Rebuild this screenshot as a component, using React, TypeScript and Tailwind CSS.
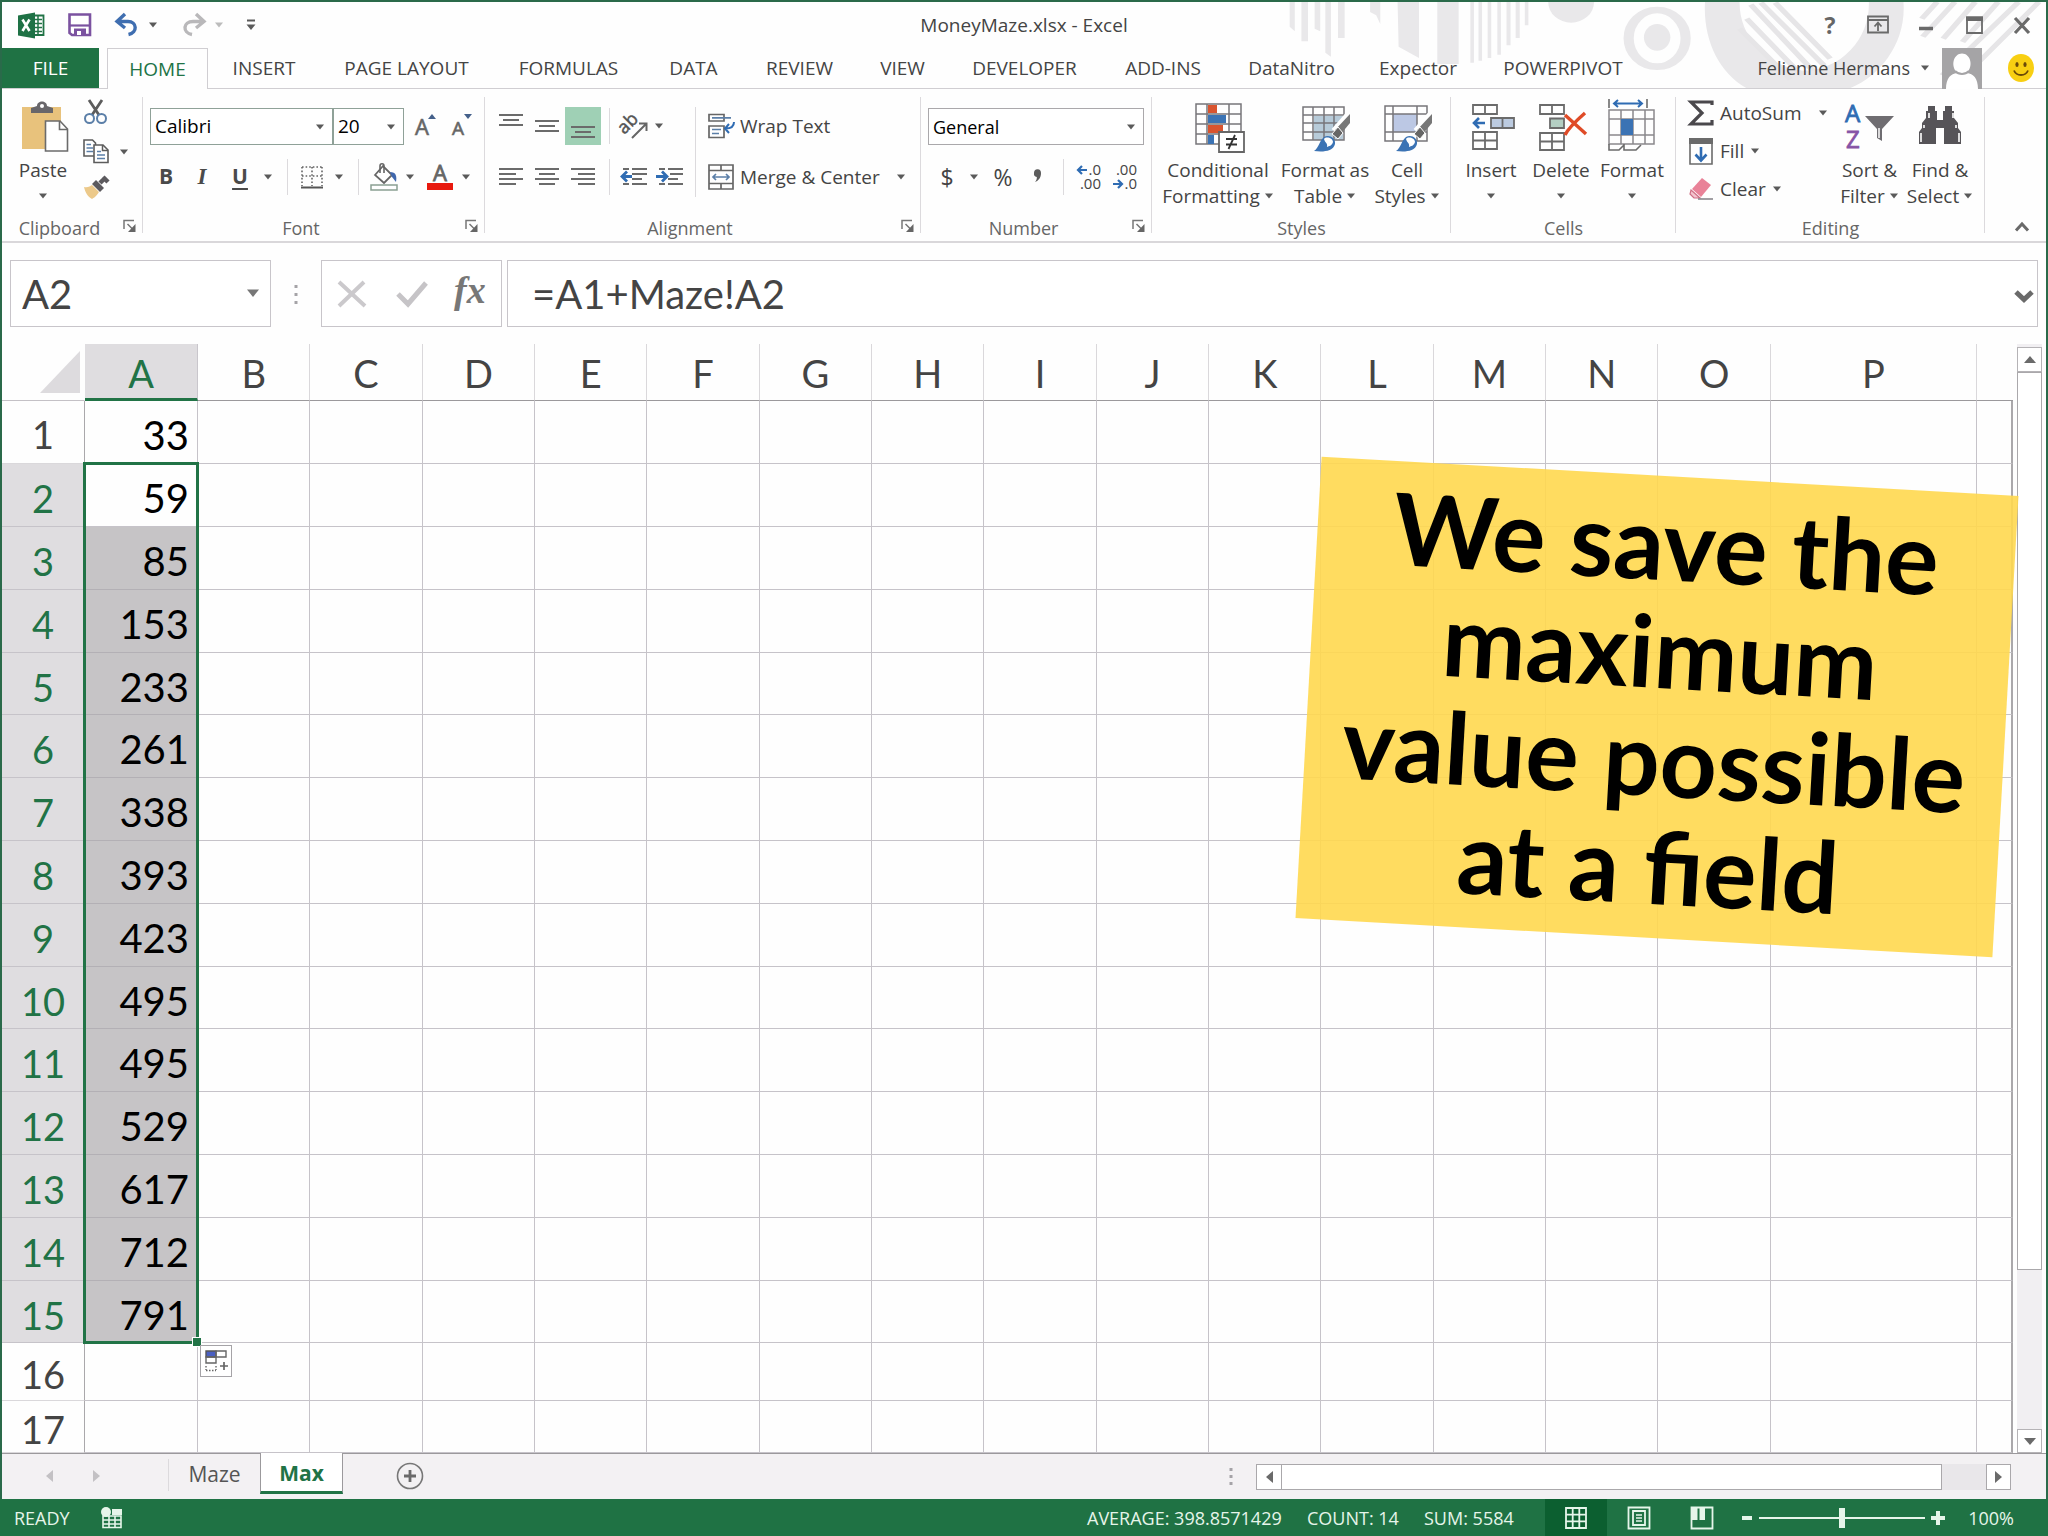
import type { ReactNode } from "react";

const UI = "font-['Open_Sans','Noto_Sans',sans-serif]";
const BODY = "font-['Lato',sans-serif]";

type IconProps = { w: number; h: number; className?: string; children: ReactNode };

function Icon({ w, h, className = "", children }: IconProps) {
  return (
    <svg width={w} height={h} viewBox={`0 0 ${w} ${h}`} fill="none" aria-hidden="true" className={`shrink-0 overflow-visible ${className}`}>
      {children}
    </svg>
  );
}

function Tri({ className = "" }: { className?: string }) {
  return (
    <Icon w={10} h={6} className={className}>
      <path d="M1 0.5H9L5 5.5Z" fill="#5a5a5a" />
    </Icon>
  );
}

function DropButton({ label, className = "" }: { label: string; className?: string }) {
  return (
    <button aria-label={label} className={`flex h-9 items-center ${className}`}>
      <Tri />
    </button>
  );
}

function IconButton({ label, className = "", children }: { label: string; className?: string; children: ReactNode }) {
  return (
    <button aria-label={label} className={`flex h-9 shrink-0 items-center justify-center ${className}`}>
      {children}
    </button>
  );
}

function Sep({ className = "" }: { className?: string }) {
  return <span className={`w-px shrink-0 bg-[#dcdadd] ${className}`} />;
}

function Launcher({ label }: { label: string }) {
  return (
    <button aria-label={label} className="absolute right-1.5 bottom-2">
      <Icon w={14} h={14}>
        <path d="M1 10V1.5H11M4.5 5L10 10.5" stroke="#777" strokeWidth="1.5" />
        <path d="M12.5 5V13H5Z" fill="#666" />
      </Icon>
    </button>
  );
}

function Group({ title, width, launcher = false, children }: { title: string; width: string; launcher?: boolean; children: ReactNode }) {
  return (
    <section aria-label={title} className={`relative flex shrink-0 flex-col ${width}`}>
      <div className="flex flex-1">{children}</div>
      <div className={`flex h-[26px] items-center justify-center text-lg text-[#666] ${launcher ? "pr-[26px]" : ""}`}>{title}</div>
      {launcher && <Launcher label={`${title} settings`} />}
      <span className="absolute top-2 right-0 bottom-2 w-px bg-[#dcdadd]" />
    </section>
  );
}

function BigButton({ lines, arrow, width, children }: { lines: string[]; arrow: "inline" | "below"; width: string; children: ReactNode }) {
  return (
    <button className={`flex shrink-0 flex-col items-center ${width}`}>
      <span className="flex h-16 items-end pb-1">{children}</span>
      {lines.map((line, i) => (
        <span key={line} className="flex h-[26px] items-center gap-1 text-[19px] leading-[26px] whitespace-nowrap">
          {line}
          {arrow === "inline" && i === lines.length - 1 && <Tri />}
        </span>
      ))}
      {arrow === "below" && (
        <span className="flex h-[26px] items-center">
          <Tri />
        </span>
      )}
    </button>
  );
}

function Lines({ h, rows }: { h: number; rows: [number, number, number][] }) {
  return (
    <Icon w={24} h={h}>
      {rows.map(([x1, x2, y]) => (
        <path key={y} d={`M${x1} ${y}H${x2}`} stroke="#6b6b6b" strokeWidth="2" />
      ))}
    </Icon>
  );
}

/* ---------- title bar and tabs ---------- */

function HeaderPattern() {
  return (
    <svg aria-hidden="true" viewBox="0 0 1568 258" preserveAspectRatio="none" className="pointer-events-none absolute top-0 -right-0.5 h-[86px] w-[798px]">
      <g fill="#e9e8ea">
        <path d="M78 0h10v88l-10-14zM101 0h13v118h-13zM127 0h11v88l-11-8zM148 0h11v164l-11-12zM173 0h13v108h-13zM236 0h20v66l-8-26-12-10z" />
        <path d="M290 0h42v168l-40-34zM368 0h42v186h-42z" />
        <path d="M433 0h7v182h-7zM449 0h7v176h-7zM467 0h7v168h-7zM486 0h7v158h-7zM504 0h8v130h-8zM522 0h8v108h-8zM540 0h7v70h-7z" />
        <path d="M586 0a45 62 0 0 0 90 0z" />
        <ellipse cx="800" cy="106" rx="26" ry="40" />
        <path d="M894 0H962A140 205 0 0 0 1088 206A130 200 0 0 0 1216 0H1284C1290 120 1240 220 1180 258H975C920 210 890 110 894 0Z" />
      </g>
      <ellipse cx="800" cy="109" rx="56" ry="85" fill="none" stroke="#e9e8ea" strokeWidth="20" />
      <g stroke="#e6e5e7" strokeWidth="12">
        <path d="M962 80L1062 232M976 50L1084 220M984 8L1106 206M1004 2L1128 190M1032 2L1140 170" />
        <path d="M1320 50L1350 0M1322 104L1385 0M1362 110L1425 0M1400 120L1470 0M1360 220L1510 0M1432 180L1550 0" />
      </g>
    </svg>
  );
}

function TitleBar() {
  return (
    <div className="relative flex h-[46px] items-center justify-between">
      <div className="flex items-center pl-4">
        <Icon w={28} h={27}>
          <path d="M14 3.500H25.500V23H14" stroke="#217346" strokeWidth="1.800" fill="#fff" />
          <path d="M16 7.500H24M16 11.500H24M16 15.500H24M16 19.500H24M20 4V23" stroke="#217346" strokeWidth="1.500" />
          <path d="M0 3.500L17 0.500V26.500L0 23.500Z" fill="#1e7145" />
          <path d="M4.500 7.500L11.500 19M11.500 7.500L4.500 19" stroke="#fff" strokeWidth="2.600" />
        </Icon>
        <button aria-label="Save" className="ml-[22px]">
          <Icon w={24} h={24}>
            <path d="M1.500 1.500H22V22H4L1.500 20Z" fill="#fff" stroke="#7b52a0" strokeWidth="2.600" />
            <path d="M2 12.500H22" stroke="#7b52a0" strokeWidth="2.200" />
            <path d="M6 15.500H18V23H6Z" fill="#7b52a0" />
            <path d="M9 18H13V22H9Z" fill="#fff" />
          </Icon>
        </button>
        <button aria-label="Undo" className="ml-[22px]">
          <Icon w={24} h={24}>
            <path d="M11 1L3 8.500L11 15M3.500 8.500H14C23 8.500 24 19.500 14.500 21.500" stroke="#3f6eb0" strokeWidth="3.400" />
          </Icon>
        </button>
        <Tri className="ml-2.5" />
        <button aria-label="Redo" className="ml-6">
          <Icon w={24} h={24}>
            <path d="M14 1L22 8.500L14 15M21.500 8.500H11C1 8.500 0 19.500 10 21.500" stroke="#b9b8ba" strokeWidth="3.400" />
          </Icon>
        </button>
        <Tri className="ml-2 opacity-40" />
        <button aria-label="Customize quick access toolbar" className="ml-[22px]">
          <Icon w={10} h={12}>
            <path d="M1 1.500H9" stroke="#5a5a5a" strokeWidth="2" />
            <path d="M0.500 5.500H9.500L5 11Z" fill="#5a5a5a" />
          </Icon>
        </button>
      </div>
      <h1 className="absolute inset-x-0 text-center text-[19px] text-[#444]">MoneyMaze.xlsx - Excel</h1>
      <div className="relative flex items-center gap-6 pr-3 text-[#666]">
        <button aria-label="Help" className="w-6 text-[23px] leading-6 font-bold">?</button>
        <button aria-label="Ribbon display options">
          <Icon w={24} h={20}>
            <path d="M2 1.500H22V17.500H2ZM2 5H22M12 16V8M8.500 11.500L12 7.500L15.500 11.500" stroke="#6a6a6a" strokeWidth="1.800" />
          </Icon>
        </button>
        <button aria-label="Minimize">
          <Icon w={24} h={20}>
            <path d="M5 13.500H19" stroke="#6a6a6a" strokeWidth="3.500" />
          </Icon>
        </button>
        <button aria-label="Maximize">
          <Icon w={24} h={20}>
            <path d="M5 2.500H20V18H5Z" stroke="#6a6a6a" strokeWidth="1.800" />
            <path d="M4 1.500H21V6H4Z" fill="#6a6a6a" />
          </Icon>
        </button>
        <button aria-label="Close">
          <Icon w={24} h={20}>
            <path d="M5 3L19 18M19 3L5 18" stroke="#6a6a6a" strokeWidth="3.200" />
          </Icon>
        </button>
      </div>
    </div>
  );
}

const TABS = [
  { name: "INSERT", width: "w-28" },
  { name: "PAGE LAYOUT", width: "w-[173px]" },
  { name: "FORMULAS", width: "w-[151px]" },
  { name: "DATA", width: "w-[99px]" },
  { name: "REVIEW", width: "w-[113px]" },
  { name: "VIEW", width: "w-[93px]" },
  { name: "DEVELOPER", width: "w-[151px]" },
  { name: "ADD-INS", width: "w-[126px]" },
  { name: "DataNitro", width: "w-[131px]" },
  { name: "Expector", width: "w-[122px]" },
  { name: "POWERPIVOT", width: "w-[168px]" },
];

function TabRow() {
  return (
    <nav className="relative flex h-[41px] items-stretch border-b border-[#d0ced2] text-[19px] text-[#444]">
      <button className="w-[97px] bg-[#1f7244] text-white">FILE</button>
      <button className="-mb-px ml-2 w-[101px] border border-b-0 border-[#d0ced2] bg-[#fefefe] text-[#217346]">HOME</button>
      {TABS.map((t) => (
        <button key={t.name} className={`shrink-0 whitespace-nowrap ${t.width}`}>
          {t.name}
        </button>
      ))}
      <div className="ml-auto flex items-center pr-3">
        <button className="flex items-center gap-2.5 text-lg whitespace-nowrap">
          Felienne Hermans <Tri />
        </button>
        <Icon w={40} h={41} className="ml-3">
          <path d="M0 0H40V41H0Z" fill="#a5a4a6" />
          <path d="M4 41C4 30 9 25.500 15 25C8 17 12 5.500 20 5.500S32 17 25 25C31 25.500 36 30 36 41Z" fill="#fff" />
          <path d="M13 23C17 27 23 27 27 23" stroke="#a5a4a6" strokeWidth="2" />
        </Icon>
        <button aria-label="Send a smile" className="ml-[26px]">
          <Icon w={26} h={28}>
            <ellipse cx="13" cy="14" rx="13" ry="14" fill="#f8cf12" />
            <ellipse cx="9" cy="10.500" rx="1.600" ry="2.500" fill="#6b4a08" />
            <ellipse cx="17" cy="10.500" rx="1.600" ry="2.500" fill="#6b4a08" />
            <path d="M6 16.500C8.500 22.500 17.500 22.500 20 16.500" stroke="#6b4a08" strokeWidth="1.800" />
          </Icon>
        </button>
      </div>
    </nav>
  );
}

/* ---------- ribbon ---------- */

function ClipboardGroup() {
  return (
    <Group title="Clipboard" width="w-[141px]" launcher>
      <div className="pt-1 pl-2">
        <BigButton lines={["Paste"]} arrow="below" width="w-[66px]">
          <Icon w={48} h={52} className="ml-1">
            <path d="M1 6H40V48H1Z" fill="#e8c27c" />
            <path d="M10 12V7L16 5C16 -1 26 -1 26 5L32 7V12Z" fill="#68666a" />
            <circle cx="21" cy="5" r="2" fill="#fff" />
            <path d="M24.500 20H39L46.500 28V50H24.500Z" fill="#fff" stroke="#6b6b6b" strokeWidth="1.600" />
            <path d="M38.500 20V28.500H46.500" stroke="#6b6b6b" strokeWidth="1.600" />
          </Icon>
        </BigButton>
      </div>
      <div className="flex flex-col pt-[11px] pl-[7px]">
        <button aria-label="Cut">
          <Icon w={26} h={25}>
            <path d="M6 0L16 15M19 0L9 15" stroke="#5c5c5c" strokeWidth="2.800" />
            <circle cx="6.500" cy="18.500" r="4.500" stroke="#5b7fa8" strokeWidth="2" />
            <circle cx="18.500" cy="18.500" r="4.500" stroke="#5b7fa8" strokeWidth="2" />
          </Icon>
        </button>
        <div className="mt-3.5 flex items-center">
          <button aria-label="Copy">
            <Icon w={26} h={25}>
              <path d="M1 1H9.500L12.500 4V17H1Z" fill="#fff" stroke="#5c5c5c" strokeWidth="1.600" />
              <path d="M3.500 5.500H8M3.500 9H10M3.500 12.500H10" stroke="#5b7fa8" strokeWidth="1.500" />
              <path d="M11 6H20L25 11V23.500H11Z" fill="#fff" stroke="#5c5c5c" strokeWidth="1.600" />
              <path d="M19.500 6V11.500H25" stroke="#5c5c5c" strokeWidth="1.500" />
              <path d="M14 12.500H18M14 16H22M14 19.500H22" stroke="#5b7fa8" strokeWidth="1.500" />
            </Icon>
          </button>
          <Tri className="ml-2.5" />
        </div>
        <button aria-label="Format painter" className="mt-3">
          <Icon w={27} h={24}>
            <path d="M1 11C5 12 7 10 9 9L16 16C13 21 9 23 9 23C5 21 2 16 1 11Z" fill="#ecc98a" />
            <path d="M9 8L13 4L21 12L17 16Z" fill="#5c5a5e" />
            <path d="M17 7L22 2M20 1L25 6" stroke="#5c5a5e" strokeWidth="4.500" />
          </Icon>
        </button>
      </div>
    </Group>
  );
}

function FontGroup() {
  return (
    <Group title="Font" width="w-[342px]" launcher>
      <div className="flex flex-col gap-[15px] pt-[19px] pl-[7px]">
        <div className="flex h-9 items-center">
          <label className="relative flex">
            <select aria-label="Font name" className="h-[37px] w-[183px] appearance-none border border-[#8fa198] bg-white pl-1 text-[19px] text-black">
              <option>Calibri</option>
            </select>
            <Tri className="absolute top-4 right-2" />
          </label>
          <label className="relative flex">
            <select aria-label="Font size" className="h-[37px] w-[71px] appearance-none border border-l border-[#8fa198] bg-white pl-1 text-[19px] text-black">
              <option>20</option>
            </select>
            <Tri className="absolute top-4 right-2" />
          </label>
          <IconButton label="Increase font size" className="ml-2.5">
            <Icon w={24} h={26}>
              <text x="1" y="22" fontSize="22" fill="#666" stroke="#666" strokeWidth="0.600" fontFamily="Open Sans">A</text>
              <path d="M14 6L18 1L22 6Z" fill="#44608a" />
            </Icon>
          </IconButton>
          <IconButton label="Decrease font size" className="ml-3">
            <Icon w={24} h={26}>
              <text x="2" y="22" fontSize="19" fill="#666" stroke="#666" strokeWidth="0.600" fontFamily="Open Sans">A</text>
              <path d="M14 1L18 6L22 1Z" fill="#44608a" />
            </Icon>
          </IconButton>
        </div>
        <div className="flex h-9 items-center text-[21px] text-[#4a4a4a]">
          <IconButton label="Bold" className="w-8 font-bold"><span>B</span></IconButton>
          <IconButton label="Italic" className="ml-1 w-8 font-['Liberation_Serif',serif] text-[23px] font-bold italic"><span>I</span></IconButton>
          <IconButton label="Underline" className="ml-1 w-9 font-bold underline decoration-2 underline-offset-4"><span>U</span></IconButton>
          <DropButton label="Underline styles" className="ml-[5px]" />
          <Sep className="ml-3.5 h-9" />
          <IconButton label="Borders" className="ml-3">
            <Icon w={24} h={24}>
              <path d="M2 2H22M2 11H22M2 2V21M12 2V21M22 2V21" stroke="#666" strokeWidth="1.600" strokeDasharray="1.600 2" />
              <path d="M1 22.500H23" stroke="#555" strokeWidth="2" />
            </Icon>
          </IconButton>
          <DropButton label="Border styles" className="ml-2.5" />
          <Sep className="ml-3.5 h-9" />
          <IconButton label="Fill color" className="ml-[11px]">
            <Icon w={28} h={28}>
              <path d="M5 12L13 3L22 12L14 20Z" fill="#fff" stroke="#666" strokeWidth="1.800" />
              <path d="M10 10V3C10 0 14 0 14 3V10" stroke="#666" strokeWidth="1.600" />
              <path d="M20 9C26 9 27 13 26 19L22 14Z" fill="#3f67ad" />
              <path d="M1 22H27V27H1Z" fill="#fff" stroke="#8aa092" strokeWidth="1.500" />
            </Icon>
          </IconButton>
          <DropButton label="Fill colors" className="ml-[7px]" />
          <IconButton label="Font color" className="ml-[11px]">
            <Icon w={28} h={28}>
              <text x="14" y="18" textAnchor="middle" fontSize="22" fill="#666" stroke="#666" strokeWidth="0.800" fontFamily="Open Sans">A</text>
              <path d="M1 20H27V27H1Z" fill="#e8190e" />
            </Icon>
          </IconButton>
          <DropButton label="Font colors" className="ml-[7px]" />
        </div>
      </div>
    </Group>
  );
}

function AlignmentGroup() {
  return (
    <Group title="Alignment" width="w-[436px]" launcher>
      <div className="flex flex-col gap-[15px] pt-[18px] pl-2">
        <div className="flex h-[37px] items-center">
          <IconButton label="Top align" className="w-9"><Lines h={32} rows={[[0, 24, 5], [4, 20, 10], [0, 24, 15]]} /></IconButton>
          <IconButton label="Middle align" className="w-9"><Lines h={32} rows={[[0, 24, 11], [4, 20, 16], [0, 24, 21]]} /></IconButton>
          <button aria-label="Bottom align" className="flex h-[38px] w-9 items-center justify-center bg-[#9fd0b5]">
            <Lines h={32} rows={[[0, 24, 17], [4, 20, 22], [0, 24, 27]]} />
          </button>
          <Sep className="ml-2 h-9" />
          <IconButton label="Orientation" className="ml-2.5">
            <Icon w={30} h={28}>
              <g transform="rotate(-45 10 13)">
                <text x="-1" y="16" fontSize="18" fill="#555" stroke="#555" strokeWidth="0.500" fontFamily="Open Sans">ab</text>
              </g>
              <path d="M12 26L26 12M19 11.500H26.500V19" stroke="#666" strokeWidth="2" />
            </Icon>
          </IconButton>
          <DropButton label="Orientation options" className="ml-1" />
        </div>
        <div className="flex h-9 items-center">
          <IconButton label="Align left" className="w-9"><Lines h={22} rows={[[0, 24, 3], [0, 17, 8], [0, 24, 13], [0, 17, 18]]} /></IconButton>
          <IconButton label="Center" className="w-9"><Lines h={22} rows={[[0, 24, 3], [4, 20, 8], [0, 24, 13], [4, 20, 18]]} /></IconButton>
          <IconButton label="Align right" className="w-9"><Lines h={22} rows={[[0, 24, 3], [7, 24, 8], [0, 24, 13], [7, 24, 18]]} /></IconButton>
          <Sep className="ml-2 h-9" />
          <IconButton label="Decrease indent" className="ml-2.5">
            <Icon w={27} h={22}>
              <path d="M3 3H9M3 18H9M12 3H27M12 8H27M12 13H22M12 18H27" stroke="#6b6b6b" strokeWidth="2" />
              <path d="M12 10.500H2M7 5.500L2 10.500L7 15.500" stroke="#2f6cb3" strokeWidth="2.800" />
            </Icon>
          </IconButton>
          <IconButton label="Increase indent" className="ml-[9px]">
            <Icon w={27} h={22}>
              <path d="M3 3H9M3 18H9M12 3H27M14 8H27M12 13H22M12 18H27" stroke="#6b6b6b" strokeWidth="2" />
              <path d="M0 10.500H10M6 5.500L11 10.500L6 15.500" stroke="#2f6cb3" strokeWidth="2.800" />
            </Icon>
          </IconButton>
        </div>
      </div>
      <Sep className="mt-[18px] ml-3 h-[90px]" />
      <div className="flex flex-col gap-[15px] pt-[19px] pl-3 text-[19px]">
        <button className="flex h-9 items-center gap-1">
          <Icon w={28} h={26}>
            <path d="M1 1.500H16V8H1ZM1 13H16V24.500H1Z" stroke="#666" strokeWidth="1.700" />
            <path d="M4 4.800H23M4 16.500H13M4 20.500H11" stroke="#5b7fa8" strokeWidth="1.700" />
            <path d="M26 9C26 14 23 15.500 17.500 15.500M21 11L17 15.500L21 20" stroke="#2f6cb3" strokeWidth="2" />
          </Icon>
          Wrap Text
        </button>
        <div className="flex h-9 items-center">
          <button className="flex items-center gap-1 whitespace-nowrap">
            <Icon w={28} h={26}>
              <path d="M1 1H25V25H1ZM1 6.500H25M1 19.500H25M13 1V6.500M13 19.500V25" stroke="#666" strokeWidth="1.700" />
              <path d="M5 13H21M8 10L5 13L8 16M18 10L21 13L18 16" stroke="#5b7fa8" strokeWidth="1.700" />
            </Icon>
            Merge &amp; Center
          </button>
          <DropButton label="Merge options" className="ml-4" />
        </div>
      </div>
    </Group>
  );
}

function NumberGroup() {
  return (
    <Group title="Number" width="w-[231px]" launcher>
      <div className="flex flex-col gap-[15px] pt-[19px] pl-[7px]">
        <label className="relative flex h-9">
          <select aria-label="Number format" className="h-[37px] w-[216px] appearance-none border border-[#aaa8ab] bg-white pl-1 text-lg text-black">
            <option>General</option>
          </select>
          <Tri className="absolute top-4 right-2" />
        </label>
        <div className="flex h-9 items-center text-[23px]">
          <IconButton label="Accounting format" className="ml-[5px] w-7"><span>$</span></IconButton>
          <DropButton label="Accounting formats" className="ml-2" />
          <IconButton label="Percent style" className="ml-2 w-8"><span>%</span></IconButton>
          <IconButton label="Comma style" className="ml-2 w-5">
            <Icon w={10} h={16}>
              <path d="M2 4A3.500 4 0 1 1 9 4.500C9 9 6 12 3 13C4.500 11 5 10 4.800 8A3.500 3.500 0 0 1 2 4Z" fill="#5c5c5c" />
            </Icon>
          </IconButton>
          <Sep className="ml-4 h-9" />
          <IconButton label="Increase decimal" className="ml-3">
            <Icon w={26} h={28}>
              <text x="25" y="12" textAnchor="end" fontSize="15" fill="#444" fontFamily="Open Sans">.0</text>
              <text x="25" y="26" textAnchor="end" fontSize="15" fill="#444" fontFamily="Open Sans">.00</text>
              <path d="M11 7H1.500M6 3L2 7L6 11" stroke="#2f6cb3" strokeWidth="2.200" />
            </Icon>
          </IconButton>
          <IconButton label="Decrease decimal" className="ml-2.5">
            <Icon w={26} h={28}>
              <text x="25" y="12" textAnchor="end" fontSize="15" fill="#444" fontFamily="Open Sans">.00</text>
              <text x="25" y="26" textAnchor="end" fontSize="15" fill="#444" fontFamily="Open Sans">.0</text>
              <path d="M1 21H10.500M6 17L10 21L6 25" stroke="#2f6cb3" strokeWidth="2.200" />
            </Icon>
          </IconButton>
        </div>
      </div>
    </Group>
  );
}

function Brush() {
  return (
    <g>
      <path d="M47 11L33 27" stroke="#fff" strokeWidth="9" />
      <path d="M48 9V18L38 30L33 25Z" fill="#777" />
      <path d="M36 22L41 28L36 34L30 29Z" fill="#666" stroke="#fff" strokeWidth="1" />
      <path d="M12 46C17 43 17 36 22 32C27 29 34 33 33 39C31 47 20 47 12 46Z" fill="#3b73b4" />
      <path d="M22 34C24 31 31 33 31 37C30 41 27 41 25 42C26 38 23 38 22 34Z" fill="#fff" />
    </g>
  );
}

function StylesGroup() {
  return (
    <Group title="Styles" width="w-[299px]">
      <div className="flex pt-1 pl-2">
        <BigButton lines={["Conditional", "Formatting"]} arrow="inline" width="w-[116px]">
          <Icon w={50} h={50} className="ml-1">
            <path d="M1 1H46V41H1ZM12 1V41M34 1V41M1 11H46M1 21H46M1 31H46" stroke="#77757a" strokeWidth="1.500" />
            <path d="M13 2H22V10H13ZM13 22H28V30H13Z" fill="#d9542f" />
            <path d="M13 12H31V20H13ZM13 32H19V41H13Z" fill="#3b73b4" />
            <path d="M24 29H49V49H24Z" fill="#fff" stroke="#666" strokeWidth="1.800" />
            <path d="M31 36H42M31 41.500H42M40 32L33.500 46" stroke="#333" strokeWidth="1.800" />
          </Icon>
        </BigButton>
        <BigButton lines={["Format as", "Table"]} arrow="inline" width="w-[98px]">
          <Icon w={50} h={48} className="ml-1">
            <path d="M12 11H41V35H12Z" fill="#b7cbd9" />
            <path d="M1 2H42V35H1ZM11 2V35M22 2V35M32 2V35M1 10H42M1 18H42M1 27H42" stroke="#77757a" strokeWidth="1.500" />
            <Brush />
          </Icon>
        </BigButton>
        <BigButton lines={["Cell", "Styles"]} arrow="inline" width="w-[66px]">
          <Icon w={50} h={48} className="ml-1">
            <path d="M9 9H33V27H9Z" fill="#bcc8e4" />
            <path d="M1 1H43V36H1ZM9 1V36M33 1V36M1 9H43M1 27H43" stroke="#77757a" strokeWidth="1.500" />
            <Brush />
          </Icon>
        </BigButton>
      </div>
    </Group>
  );
}

function CellsGroup() {
  return (
    <Group title="Cells" width="w-[225px]">
      <div className="flex pt-1 pl-1.5">
        <BigButton lines={["Insert"]} arrow="below" width="w-[68px]">
          <Icon w={44} h={50} className="ml-1">
            <path d="M2 2H26V11H2ZM14 2V11M2 29H26V46H2ZM14 29V46M2 37.500H26" stroke="#6b6b6b" strokeWidth="1.800" />
            <path d="M20 15H43V25H20Z" fill="#bccbe0" stroke="#6b6b6b" strokeWidth="1.800" />
            <path d="M31.500 15V25" stroke="#6b6b6b" strokeWidth="1.800" />
            <path d="M14 20H3M8 15L3 20L8 25" stroke="#2f6cb3" strokeWidth="2.600" />
          </Icon>
        </BigButton>
        <BigButton lines={["Delete"]} arrow="below" width="w-[72px]">
          <Icon w={50} h={50} className="ml-1">
            <path d="M2 2H26V11H2ZM14 2V11M2 30H26V47H2ZM14 30V47M2 38.500H26" stroke="#6b6b6b" strokeWidth="1.800" />
            <path d="M12 15.500H26V25H12Z" fill="#b4cfc3" stroke="#6b6b6b" strokeWidth="1.800" />
            <path d="M27 12L48 31M47 10C39 17 31 24 27 32" stroke="#df4b27" strokeWidth="3.400" />
          </Icon>
        </BigButton>
        <BigButton lines={["Format"]} arrow="below" width="w-[70px]">
          <Icon w={48} h={54}>
            <path d="M1 0V9M39 0V9" stroke="#6b6b6b" strokeWidth="1.600" />
            <path d="M6 4.500H34M10 1L6 4.500L10 8M30 1L34 4.500L30 8" stroke="#2f6cb3" strokeWidth="2" />
            <path d="M1 11H46V45H1ZM13 11V45M25 11V45M37 11V45M1 20H46M1 36H46" stroke="#8a888c" strokeWidth="1.500" />
            <path d="M13 20H25V36H13Z" fill="#3b73b4" />
            <path d="M1 45V51H11L16 46M16 45V51H28L33 46" stroke="#6b6b6b" strokeWidth="1.600" />
          </Icon>
        </BigButton>
      </div>
    </Group>
  );
}

function EditingGroup() {
  return (
    <Group title="Editing" width="w-[309px]">
      <div className="flex w-[152px] flex-col gap-1 pt-[7px] pl-3 text-[19px]">
        <button className="flex h-[34px] items-center gap-1.5">
          <Icon w={26} h={27}>
            <path d="M24 5V2H3L14 13L3 24H24V20" stroke="#4a484c" strokeWidth="3.200" />
          </Icon>
          AutoSum
          <Tri className="ml-auto" />
        </button>
        <button className="flex h-[34px] items-center gap-1.5">
          <Icon w={26} h={27}>
            <path d="M2 1H24V26H2Z" fill="#fff" stroke="#6b6b6b" strokeWidth="1.600" />
            <path d="M1 0H25V6H1Z" fill="#6b6b6b" />
            <path d="M13 9V22M7.500 16.500L13 22.500L18.500 16.500" stroke="#2f6cb3" strokeWidth="2.600" />
          </Icon>
          Fill
          <Tri />
        </button>
        <button className="flex h-[34px] items-center gap-1.5">
          <Icon w={26} h={24}>
            <path d="M14 1L23 8L13 20L4 12Z" fill="#e98298" />
            <path d="M3 13L12 21H6L2 17Z" fill="#f3c4ce" stroke="#cf6f85" strokeWidth="1.200" />
            <path d="M10 22H25" stroke="#8a888c" strokeWidth="1.600" />
          </Icon>
          Clear
          <Tri />
        </button>
      </div>
      <div className="flex pt-1 pl-1.5">
        <BigButton lines={["Sort &", "Filter"]} arrow="inline" width="w-[71px]">
          <Icon w={50} h={50}>
            <text x="0" y="19" fontSize="24" fill="#2f6cb3" stroke="#2f6cb3" strokeWidth="0.800" fontFamily="Open Sans">A</text>
            <text x="1" y="45" fontSize="24" fill="#8653a6" stroke="#8653a6" strokeWidth="0.800" fontFamily="Open Sans">Z</text>
            <path d="M20 13H49L37 26V38L32 35V26Z" fill="#6f6d71" />
            <path d="M34 25V35" stroke="#fff" strokeWidth="1.500" />
          </Icon>
        </BigButton>
        <BigButton lines={["Find &", "Select"]} arrow="inline" width="w-[70px]">
          <Icon w={44} h={49}>
            <path d="M10 2H17V7H19V16H25V7H27V2H34V7H36V14L40 19V24L43 28V40H26V24H18V40H1V28L4 24V19L8 14V7H10Z" fill="#565458" />
            <path d="M11 9V14M6 21V24M3 29V38M35 9V14M38 21V24M41 29V38" stroke="#fff" strokeWidth="1.600" />
          </Icon>
        </BigButton>
      </div>
    </Group>
  );
}

function Ribbon() {
  return (
    <div className="relative flex h-[154px] border-b-2 border-[#d9d7da] text-[#444]">
      <ClipboardGroup />
      <FontGroup />
      <AlignmentGroup />
      <NumberGroup />
      <StylesGroup />
      <CellsGroup />
      <EditingGroup />
      <button aria-label="Collapse the ribbon" className="absolute right-4 bottom-2">
        <Icon w={16} h={12}>
          <path d="M2 9.500L8 3L14 9.500" stroke="#6a6a6a" strokeWidth="3" />
        </Icon>
      </button>
    </div>
  );
}

/* ---------- formula bar ---------- */

function FormulaBar() {
  return (
    <div className={`flex items-start pt-[17px] pr-2 pb-[17px] pl-2 text-[40px] text-[#444] ${BODY}`}>
      <label className="relative flex">
        <input aria-label="Name box" defaultValue="A2" className="h-[67px] w-[261px] border border-[#c8c5ca] bg-white pl-[11px] outline-none" />
        <Icon w={12} h={8} className="absolute top-[29px] right-3">
          <path d="M0 0.500H12L6 8Z" fill="#777" />
        </Icon>
      </label>
      <Icon w={4} h={67} className="ml-[23px]">
        <path d="M2 25V44" stroke="#a5a3a7" strokeWidth="3" strokeDasharray="3 5" />
      </Icon>
      <div className="ml-[23px] flex h-[67px] w-[181px] items-center border border-[#c8c5ca] bg-white pl-[15px]">
        <button aria-label="Cancel">
          <Icon w={30} h={28}>
            <path d="M2 2L28 26M27 2L2 26" stroke="#cbc9cc" strokeWidth="4" />
          </Icon>
        </button>
        <button aria-label="Enter" className="ml-[29px]">
          <Icon w={32} h={28}>
            <path d="M2 14L12 24L30 3" stroke="#c6c4c7" strokeWidth="5" />
          </Icon>
        </button>
        <button aria-label="Insert function" className="-mt-2 ml-[26px] font-['Liberation_Serif',serif] text-[38px] leading-9 font-bold text-[#777] italic">
          fx
        </button>
      </div>
      <label className="relative ml-[5px] flex flex-1">
        <input aria-label="Formula" defaultValue="=A1+Maze!A2" className="h-[67px] w-full border border-[#c8c5ca] bg-white pl-6 outline-none" />
        <Icon w={20} h={14} className="absolute top-[29px] right-1">
          <path d="M2 3L10 10.500L18 3" stroke="#6a6a6a" strokeWidth="5" />
        </Icon>
      </label>
    </div>
  );
}

/* ---------- worksheet ---------- */

const COLUMNS = "ABCDEFGHIJKLMNOP".split("");
const VALUES = [33, 59, 85, 153, 233, 261, 338, 393, 423, 495, 495, 529, 617, 712, 791];
const ROWS = Array.from({ length: 17 }, (_, i) => i + 1);

function rowHeight(row: number) {
  if (row === 17) return "h-[52px]";
  if (row === 16) return "h-[58px]";
  return row % 5 === 0 ? "h-[62px]" : "h-[63px]";
}

function Sheet() {
  return (
    <table className={`w-full table-fixed border-separate border-spacing-0 text-[#444] ${BODY}`}>
      <colgroup>
        <col className="w-[83px]" />
        <col className="w-[113px]" />
        {COLUMNS.slice(1, 15).map((c) => (
          <col key={c} />
        ))}
        <col className="w-[206px]" />
        <col className="w-9" />
      </colgroup>
      <thead>
        <tr className="h-[57px] text-[38px] leading-[50px]">
          <th className="border-r border-b border-r-transparent border-b-[#c4c1c6] p-0">
            <Icon w={44} h={44} className="ml-auto">
              <path d="M40 1V43H0Z" fill="#dddbde" />
            </Icon>
          </th>
          {COLUMNS.map((c) => (
            <th
              key={c}
              scope="col"
              className={
                c === "A"
                  ? "border-r border-b-3 border-r-[#c9c6cc] border-b-[#217346] bg-[#dfdde0] p-0 pt-1 font-normal text-[#217346]"
                  : "border-r border-b border-r-[#dad8db] border-b-[#9b999c] p-0 pt-0.5 font-normal"
              }
            >
              {c}
            </th>
          ))}
          <th className="border-b border-[#9b999c] p-0" />
        </tr>
      </thead>
      <tbody>
        {ROWS.map((row) => {
          const picked = row >= 2 && row <= 15;
          return (
            <tr key={row} className={rowHeight(row)}>
              <th
                scope="row"
                className={
                  picked
                    ? "border-r border-b border-r-[#c6c3c9] border-b-[#c6c3c9] bg-[#dfdde0] p-0 pt-1.5 text-[38px] leading-[50px] font-normal text-[#217346]"
                    : "border-r border-b border-r-[#aaa8ab] border-b-[#dad8db] p-0 pt-1 text-[38px] leading-[46px] font-normal"
                }
              >
                {row}
              </th>
              {COLUMNS.map((c) => (
                <td
                  key={c}
                  className={
                    c === "A" && row > 2 && picked
                      ? "relative border-r border-b border-[#b3b0b5] bg-[#c6c4c6] p-0 pt-1.5 pr-2 text-right text-[40px] leading-[50px] text-black"
                      : "relative border-r border-b border-[#c6c3c9] p-0 pt-1.5 pr-2 text-right text-[40px] leading-[45px] text-black"
                  }
                >
                  {c === "A" ? VALUES[row - 1] : null}
                  {c === "A" && row === 2 && (
                    <span className="pointer-events-none absolute -top-0.5 -right-0.5 -left-0.5 z-10 h-[882px] border-3 border-[#217346]">
                      <span className="absolute -right-1.5 -bottom-1.5 size-2.5 border border-white bg-[#217346]" />
                    </span>
                  )}
                  {c === "B" && row === 16 && (
                    <button aria-label="Auto fill options" className="absolute top-0.5 left-0.5 z-10 size-8 border border-[#a5a3a7] bg-white pl-1">
                      <Icon w={24} h={24}>
                        <path d="M1 2H11V8H1Z" fill="#4a5fc1" stroke="#555" strokeWidth="1.400" />
                        <path d="M11 2H21V8H11ZM1 8H11V14H1Z" stroke="#666" strokeWidth="1.400" />
                        <path d="M1 17V21M1 21.500H11M11 17V21" stroke="#666" strokeWidth="1.400" strokeDasharray="1.500 1.500" />
                        <path d="M19 13V21M15 17H23" stroke="#666" strokeWidth="1.700" />
                      </Icon>
                    </button>
                  )}
                </td>
              ))}
              <td className="border-r-2 border-b border-r-[#aaa8ab] border-b-[#c6c3c9] p-0" />
            </tr>
          );
        })}
      </tbody>
    </table>
  );
}

function VerticalScroll() {
  return (
    <div className="flex w-[25px] shrink-0 flex-col bg-[#f1eff2] pt-[3px]">
      <button aria-label="Scroll up" className="flex h-[25px] items-center justify-center border border-[#b5b3b6] bg-white">
        <Icon w={12} h={7}>
          <path d="M0 7L6 0L12 7Z" fill="#6a6a6a" />
        </Icon>
      </button>
      <div className="h-[898px] border border-[#aaa8ab] bg-white" />
      <button aria-label="Scroll down" className="mt-auto flex h-6 items-center justify-center border border-[#b5b3b6] bg-white">
        <Icon w={12} h={7}>
          <path d="M0 0L6 7L12 0Z" fill="#6a6a6a" />
        </Icon>
      </button>
    </div>
  );
}

function Worksheet() {
  return (
    <main className="relative flex">
      <div className="min-w-0 flex-1">
        <Sheet />
      </div>
      <div className="w-1 shrink-0" />
      <VerticalScroll />
      <div className="w-1 shrink-0" />
      <aside
        className={`absolute top-[132px] right-10 z-20 flex h-[462px] w-[698px] rotate-[3.24deg] items-center justify-center bg-[#ffd84f]/90 pb-2 text-center text-[100px] leading-[108px] font-bold text-black ${BODY}`}
      >
        <p>
          We save the
          <br />
          maximum
          <br />
          value possible
          <br />
          at a field
        </p>
      </aside>
    </main>
  );
}

/* ---------- bottom bars ---------- */

function SheetTabs() {
  return (
    <div className="flex h-[46px] items-start border-t border-[#9b999c] bg-[#f3f1f3] text-[21px] text-[#555]">
      <div className="flex h-[44px] items-center pl-[43px]">
        <button aria-label="Previous sheet">
          <Icon w={8} h={12}>
            <path d="M8 0V12L1 6Z" fill="#c3c1c4" />
          </Icon>
        </button>
        <button aria-label="Next sheet" className="ml-10">
          <Icon w={8} h={12}>
            <path d="M0 0V12L7 6Z" fill="#c3c1c4" />
          </Icon>
        </button>
      </div>
      <Sep className="mt-[5px] ml-[67px] h-8 bg-[#9b999c]" />
      <button className="h-[42px] w-[91px]">Maze</button>
      <button className="-mt-px h-[41px] w-[83px] border-x border-b-3 border-x-[#9b999c] border-b-[#217346] bg-white pt-1 font-bold text-[#217346]">Max</button>
      <button aria-label="New sheet" className="mt-2 ml-[53px]">
        <Icon w={28} h={28}>
          <circle cx="14" cy="14" r="12.500" stroke="#777" strokeWidth="1.600" />
          <path d="M14 8V20M8 14H20" stroke="#6a6a6a" strokeWidth="2.800" />
        </Icon>
      </button>
      <div className="mt-2.5 mr-[35px] ml-auto flex w-[782px] items-center">
        <Icon w={4} h={26}>
          <path d="M2 4V22" stroke="#a5a3a7" strokeWidth="3" strokeDasharray="3 4" />
        </Icon>
        <div className="ml-auto flex h-[26px] w-[755px] bg-[#e9e7ea]">
          <button aria-label="Scroll left" className="flex w-[26px] items-center justify-center border border-[#aaa8ab] bg-white">
            <Icon w={7} h={12}>
              <path d="M7 0V12L0 6Z" fill="#6a6a6a" />
            </Icon>
          </button>
          <div className="w-[660px] border border-l-0 border-[#aaa8ab] bg-white" />
          <button aria-label="Scroll right" className="ml-auto flex w-[25px] items-center justify-center border border-[#aaa8ab] bg-white">
            <Icon w={7} h={12}>
              <path d="M0 0V12L7 6Z" fill="#6a6a6a" />
            </Icon>
          </button>
        </div>
      </div>
    </div>
  );
}

function StatusBar() {
  return (
    <footer className="-mx-0.5 flex h-[38px] items-center bg-[#1f7244] pl-3.5 text-lg whitespace-nowrap text-[#e6f5ea]">
      <span>READY</span>
      <button aria-label="Record macro" className="ml-[30px]">
        <Icon w={24} h={24}>
          <path d="M3 10H21V21.500H3ZM9 10V21.500M15 10V21.500M3 14H21M3 18H21" stroke="#e6f5ea" strokeWidth="1.600" />
          <path d="M12 3H22V9H12Z" fill="#e6f5ea" />
          <circle cx="6" cy="6" r="5" fill="#e6f5ea" />
        </Icon>
      </button>
      <div className="ml-auto flex items-center">
        <span className="w-[220px]">AVERAGE: 398.8571429</span>
        <span className="w-[117px]">COUNT: 14</span>
        <span className="w-[121px]">SUM: 5584</span>
        <button aria-label="Normal view" className="flex h-[38px] w-[62px] items-center justify-center bg-[#0c5f30]">
          <Icon w={24} h={24}>
            <path d="M2 2H22V22H2ZM8.700 2V22M15.300 2V22M2 8.700H22M2 15.300H22" stroke="#e6f5ea" strokeWidth="1.800" />
          </Icon>
        </button>
        <button aria-label="Page layout view" className="ml-5">
          <Icon w={24} h={24}>
            <path d="M1.500 1.500H22.500V22.500H1.500ZM6 5H18V19H6Z" stroke="#e6f5ea" strokeWidth="1.800" />
            <path d="M9 9H15M9 12H15M9 15H15" stroke="#e6f5ea" strokeWidth="1.500" />
          </Icon>
        </button>
        <button aria-label="Page break preview" className="ml-[39px]">
          <Icon w={24} h={24}>
            <path d="M1.500 1.500H22.500V22.500H1.500Z" stroke="#e6f5ea" strokeWidth="1.800" />
            <path d="M2 2H7.500V14H2ZM9.500 2H15V14H9.500Z" fill="#e6f5ea" />
          </Icon>
        </button>
        <button aria-label="Zoom out" className="ml-[27px]">
          <Icon w={12} h={12}>
            <path d="M1 6H11" stroke="#e6f5ea" strokeWidth="4" />
          </Icon>
        </button>
        <input
          type="range"
          aria-label="Zoom"
          min={0}
          max={200}
          defaultValue={100}
          className="mx-1.5 h-5 w-[166px] appearance-none bg-transparent bg-[linear-gradient(#e6f5ea,#e6f5ea)] bg-[length:100%_2px] bg-center bg-no-repeat [&::-webkit-slider-thumb]:h-5 [&::-webkit-slider-thumb]:w-1.5 [&::-webkit-slider-thumb]:appearance-none [&::-webkit-slider-thumb]:bg-[#e6f5ea]"
        />
        <button aria-label="Zoom in">
          <Icon w={14} h={14}>
            <path d="M0 7H14M7 0V14" stroke="#e6f5ea" strokeWidth="4" />
          </Icon>
        </button>
        <button className="w-[103px] pr-[34px] text-right">100%</button>
      </div>
    </footer>
  );
}

export default function App() {
  return (
    <div className={`flex min-h-screen flex-col border-x-2 border-t-2 border-[#2a6a4a] bg-[#fefefe] ${UI}`}>
      <header className="relative">
        <HeaderPattern />
        <TitleBar />
        <TabRow />
        <Ribbon />
      </header>
      <FormulaBar />
      <Worksheet />
      <SheetTabs />
      <StatusBar />
    </div>
  );
}
